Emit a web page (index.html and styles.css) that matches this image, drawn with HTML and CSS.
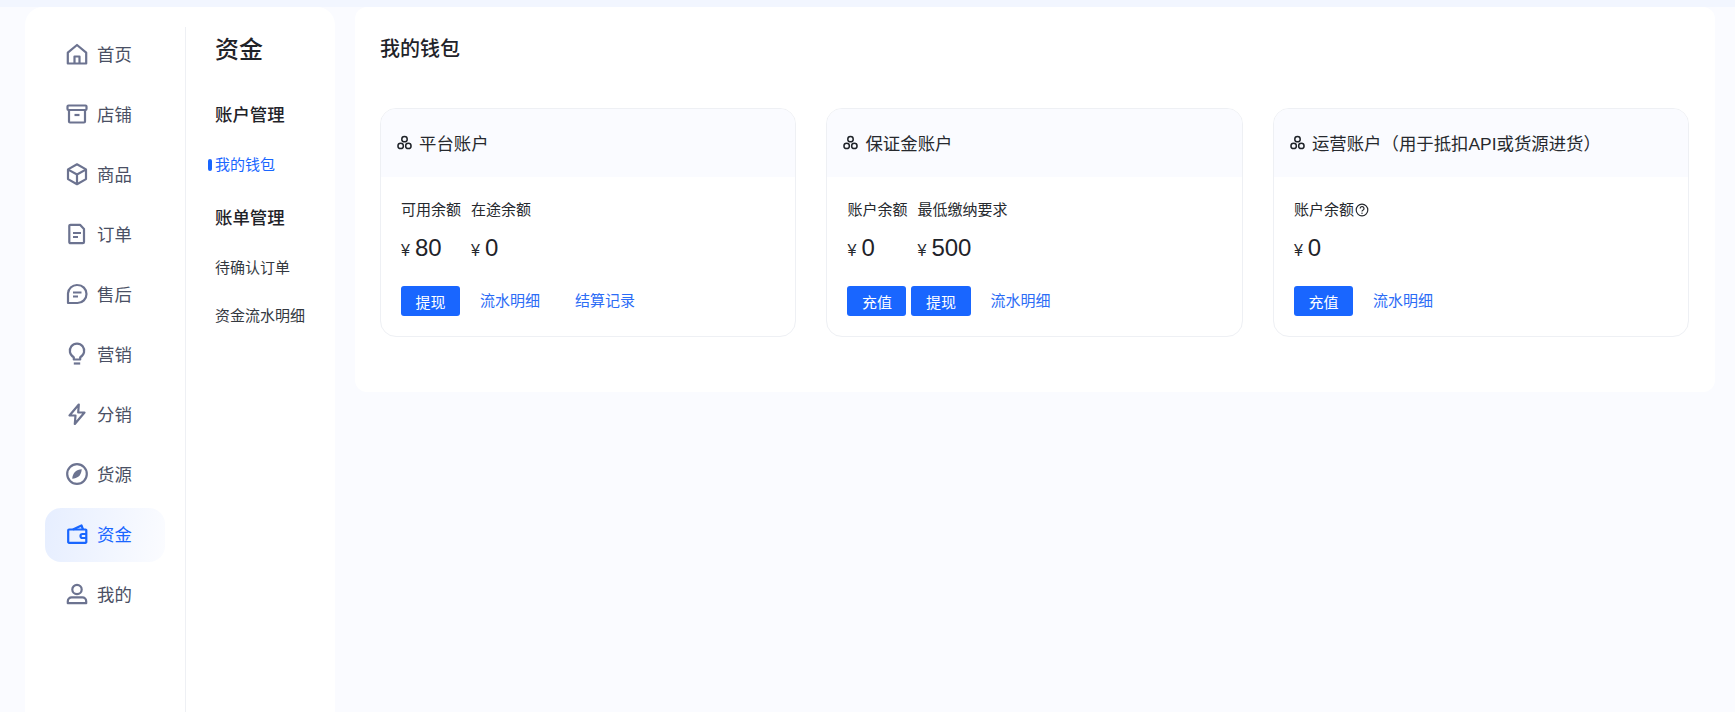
FILE: index.html
```html
<!DOCTYPE html>
<html lang="zh-CN">
<head>
<meta charset="utf-8">
<title>我的钱包</title>
<link rel="stylesheet" href="styles.css">
</head>
<body>
<div class="top-strip"></div>
<div class="layout">
  <aside class="sidebar">
    <nav class="nav">
      <a class="nav-item"><svg class="nav-icon" viewBox="0 0 24 24"><path d="M2.800 10.600 12 3l9.200 7.600V21.500H2.800Z"/><path d="M9.500 21.500v-7h5v7"/></svg><span>首页</span></a>
      <a class="nav-item"><svg class="nav-icon" viewBox="0 0 24 24"><rect x="2.500" y="3.500" width="19" height="4.500" rx="1"/><path d="M4 8v11.500a1 1 0 0 0 1 1h14a1 1 0 0 0 1-1V8"/><path d="M9.500 13h5"/></svg><span>店铺</span></a>
      <a class="nav-item"><svg class="nav-icon" viewBox="0 0 24 24"><path d="m12 2.300 9 5.100v9.700l-9 5.100-9-5.100V7.400Z"/><path d="m3.200 7.600 8.800 4.900 8.800-4.900M12 12.500v9.700"/></svg><span>商品</span></a>
      <a class="nav-item"><svg class="nav-icon" viewBox="0 0 24 24"><path d="M5.500 2.800h9.500l4 4.200v13a1.200 1.200 0 0 1-1.200 1.200H5.500A1.200 1.200 0 0 1 4.300 20V4a1.200 1.200 0 0 1 1.200-1.200Z"/><path d="M8 11h8M8 15h5"/></svg><span>订单</span></a>
      <a class="nav-item"><svg class="nav-icon" viewBox="0 0 24 24"><path d="M12.500 3a9 9 0 0 1 0 18H3v-9.500A9 9 0 0 1 12.500 3Z"/><path d="M8 10.500h8.500M8 14.500h5"/></svg><span>售后</span></a>
      <a class="nav-item"><svg class="nav-icon" viewBox="0 0 24 24"><path d="M8.800 17.500v-2.300A7.200 7.200 0 1 1 15.200 15.200v2.300Z"/><path d="M8.800 21.500h6.400"/></svg><span>营销</span></a>
      <a class="nav-item"><svg class="nav-icon" viewBox="0 0 24 24"><path d="M13.800 2.500 4.500 13.500h6L9.800 22l9.700-11.500h-6.300Z"/></svg><span>分销</span></a>
      <a class="nav-item"><svg class="nav-icon" viewBox="0 0 24 24"><circle cx="12" cy="12" r="9.800"/><path class="icon-fill" d="M16.800 7.200c-.4 3.600-1.600 6-3.200 7.400-1.500 1.300-3.800 2-6.400 2.200.3-3 1.300-5.400 3-7 1.500-1.500 3.800-2.300 6.600-2.600Z"/></svg><span>货源</span></a>
      <a class="nav-item nav-item-active"><svg class="nav-icon" viewBox="0 0 24 24"><path d="M4 7.500h16.500a.8.800 0 0 1 .8.800V20a.8.800 0 0 1-.8.800H4a.8.800 0 0 1-.8-.8V8.300A.8.800 0 0 1 4 7.500Z"/><path d="m8 7.500 8.500-4 1.500 4"/><path d="M21 12h-3.500a2 2 0 0 0 0 4H21"/></svg><span>资金</span></a>
      <a class="nav-item"><svg class="nav-icon" viewBox="0 0 24 24"><circle cx="12" cy="7.500" r="4.700"/><path d="M2.800 21.200v-2a3.800 3.800 0 0 1 3.800-3.800h10.800a3.800 3.800 0 0 1 3.800 3.800v2Z"/></svg><span>我的</span></a>
    </nav>
    <div class="subnav">
      <h2 class="subnav-title">资金</h2>
      <h3 class="subnav-group">账户管理</h3>
      <a class="subnav-link subnav-link-active">我的钱包</a>
      <h3 class="subnav-group subnav-group-next">账单管理</h3>
      <a class="subnav-link">待确认订单</a>
      <a class="subnav-link subnav-link-last">资金流水明细</a>
    </div>
  </aside>
  <main class="panel">
    <h1 class="panel-title">我的钱包</h1>
    <div class="cards">
      <section class="card">
        <header class="card-head"><svg class="card-icon" viewBox="0 0 16 16"><circle cx="8" cy="4.400" r="2.900"/><circle cx="3.900" cy="11.600" r="2.900"/><circle cx="12.100" cy="11.600" r="2.900"/></svg><span>平台账户</span></header>
        <div class="card-body">
          <div class="stats">
            <div class="stat"><div class="stat-label">可用余额</div><div class="stat-value"><span class="yen">¥</span>80</div></div>
            <div class="stat"><div class="stat-label">在途余额</div><div class="stat-value"><span class="yen">¥</span>0</div></div>
          </div>
          <div class="actions"><button class="btn">提现</button><a class="link">流水明细</a><a class="link">结算记录</a></div>
        </div>
      </section>
      <section class="card">
        <header class="card-head"><svg class="card-icon" viewBox="0 0 16 16"><circle cx="8" cy="4.400" r="2.900"/><circle cx="3.900" cy="11.600" r="2.900"/><circle cx="12.100" cy="11.600" r="2.900"/></svg><span>保证金账户</span></header>
        <div class="card-body">
          <div class="stats">
            <div class="stat"><div class="stat-label">账户余额</div><div class="stat-value"><span class="yen">¥</span>0</div></div>
            <div class="stat"><div class="stat-label">最低缴纳要求</div><div class="stat-value"><span class="yen">¥</span>500</div></div>
          </div>
          <div class="actions"><button class="btn">充值</button><button class="btn">提现</button><a class="link">流水明细</a></div>
        </div>
      </section>
      <section class="card">
        <header class="card-head"><svg class="card-icon" viewBox="0 0 16 16"><circle cx="8" cy="4.400" r="2.900"/><circle cx="3.900" cy="11.600" r="2.900"/><circle cx="12.100" cy="11.600" r="2.900"/></svg><span>运营账户（用于抵扣API或货源进货）</span></header>
        <div class="card-body">
          <div class="stats">
            <div class="stat">
              <div class="stat-label stat-label-help">账户余额<svg class="help-icon" viewBox="0 0 14 14"><circle cx="7" cy="7" r="5.800"/><path d="M5.200 5.500a1.900 1.900 0 1 1 2.900 1.600c-.7.400-1.100.8-1.100 1.500"/><circle class="icon-dot" cx="7" cy="10.300" r=".7"/></svg></div>
              <div class="stat-value"><span class="yen">¥</span>0</div>
            </div>
          </div>
          <div class="actions"><button class="btn">充值</button><a class="link">流水明细</a></div>
        </div>
      </section>
    </div>
  </main>
</div>
</body>
</html>
```
FILE: styles.css
```css
* { box-sizing: border-box; }
html, body { height: 100%; }
body {
  margin: 0;
  background: #fafbff;
  color: #1f2329;
  font-family: "Liberation Sans", "Noto Sans CJK SC", sans-serif;
  font-size: 15px;
  overflow: hidden;
}
h1, h2, h3 { margin: 0; }
a { text-decoration: none; }

.top-strip { height: 7px; background: #f2f6ff; }
.layout { display: flex; align-items: flex-start; gap: 20px; padding: 0 20px 0 25px; }

.sidebar {
  flex: none;
  display: flex;
  width: 310px;
  height: 705px;
  padding-top: 20px;
  background: #fff;
  border-radius: 18px 18px 0 0;
}

.nav {
  flex: none;
  display: flex;
  flex-direction: column;
  gap: 6px;
  width: 161px;
  padding: 1px 20px 0;
  border-right: 1px solid #eef0f4;
}
.nav-item {
  display: flex;
  align-items: center;
  gap: 8px;
  height: 54px;
  padding: 0 0 3px 20px;
  border-radius: 16px;
  color: #4a5064;
  font-size: 17.400px;
}
.nav-icon {
  flex: none;
  width: 24px;
  height: 24px;
  fill: none;
  stroke: #6c7390;
  stroke-width: 2.200;
  stroke-linejoin: round;
  stroke-linecap: butt;
}
.icon-fill { fill: #6c7390; stroke: none; }
.nav-item-active {
  background: linear-gradient(100deg, #e6eeff 0%, #fbfcff 100%);
  color: #1966ff;
}
.nav-item-active .nav-icon { stroke: #1966ff; }

.subnav { flex: 1; display: flex; flex-direction: column; padding-left: 29px; }
.subnav-title { height: 46px; font-size: 24px; line-height: 46px; font-weight: 500; }
.subnav-group { margin-top: 30px; height: 24px; font-size: 17.400px; line-height: 24px; font-weight: 500; }
.subnav-group-next { margin-top: 29px; }
.subnav-link { position: relative; margin-top: 26px; height: 24px; color: #33383f; line-height: 24px; }
.subnav-link-last { margin-top: 24px; }
.subnav-link-active { color: #1966ff; }
.subnav-link-active::before {
  content: "";
  position: absolute;
  left: -7px;
  top: 6px;
  width: 4px;
  height: 12px;
  border-radius: 2px;
  background: #1966ff;
}

.panel {
  flex: 1;
  min-width: 0;
  padding: 27px 25.600px 55px 25px;
  background: #fff;
  border-radius: 12px;
}
.panel-title { height: 30px; font-size: 20px; line-height: 30px; font-weight: 500; }
.cards { display: grid; grid-template-columns: repeat(3, 1fr); gap: 30px; margin-top: 44px; }

.card { overflow: hidden; border: 1px solid #eef0f4; border-radius: 16px; }
.card-head {
  display: flex;
  align-items: center;
  gap: 7px;
  height: 68px;
  padding: 0 0 2px 16px;
  background: #fafbff;
  color: #26292e;
  font-size: 17.400px;
}
.card-icon { flex: none; width: 15px; height: 15px; fill: none; stroke: #1f2329; stroke-width: 1.600; }
.card-body { padding: 21px 20px 20px; }

.stats { display: flex; gap: 10px; }
.stat { flex: none; min-width: 60px; }
.stat-label { height: 24px; color: #26292e; line-height: 24px; }
.stat-label-help { display: flex; align-items: center; }
.help-icon { width: 14px; height: 14px; margin-left: 1px; fill: none; stroke: #26292e; stroke-width: 1.200; }
.icon-dot { fill: #26292e; stroke: none; }
.stat-value { height: 36px; margin-top: 8px; color: #1f2329; font-size: 24px; line-height: 36px; }
.yen { margin-right: 5px; font-size: 16px; color: #26292e; }

.actions { display: flex; align-items: center; gap: 5px; margin-top: 20px; }
.btn {
  height: 30px;
  padding: 0 14.500px;
  border: 0;
  border-radius: 3px;
  background: #1966ff;
  color: #fff;
  font: inherit;
}
.link { padding: 0 15px; color: #2b6cf6; line-height: 30px; }
```
